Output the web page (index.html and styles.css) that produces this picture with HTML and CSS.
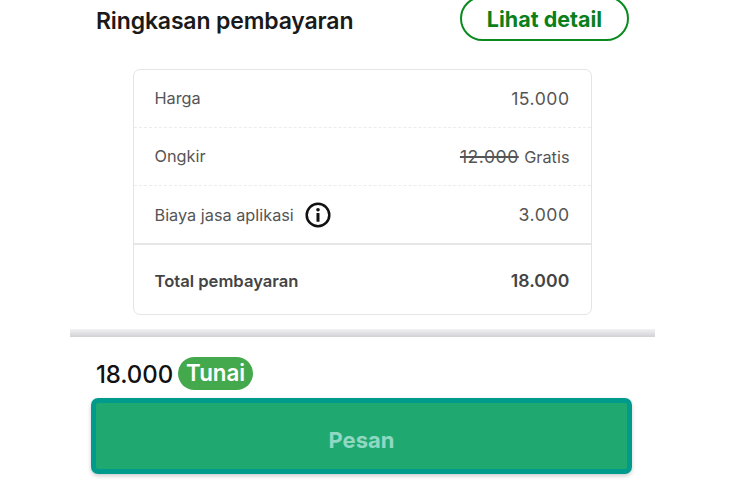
FILE: index.html
```html
<!DOCTYPE html>
<html lang="id">
<head>
<meta charset="utf-8">
<title>Ringkasan pembayaran</title>
<link rel="stylesheet" href="styles.css">
</head>
<body>
<main class="screen">
  <header class="head">
    <h1 class="title">Ringkasan pembayaran</h1>
    <button class="detail-btn">Lihat detail</button>
  </header>
  <section class="card">
    <div class="row dotted"><span>Harga</span><span class="num">15.000</span></div>
    <div class="row dotted"><span>Ongkir</span><span class="num"><s>12.000</s> <span class="label">Gratis</span></span></div>
    <div class="row solid">
      <span class="with-icon">Biaya jasa aplikasi
        <svg class="info" viewBox="0 0 26 26" aria-hidden="true"><circle cx="13" cy="13" r="11.3" fill="none" stroke="#111" stroke-width="2.5"/><circle cx="13" cy="7.8" r="1.8" fill="#111"/><rect x="11.5" y="11" width="3" height="8.8" rx=".5" fill="#111"/></svg>
      </span>
      <span class="num">3.000</span>
    </div>
    <div class="row total"><span>Total pembayaran</span><span class="num">18.000</span></div>
  </section>
  <div class="divider"></div>
  <section class="pay">
    <div class="pay-line"><span class="pay-amount">18.000</span><span class="badge">Tunai</span></div>
    <button class="order-btn">Pesan</button>
  </section>
</main>
</body>
</html>
```
FILE: styles.css
```css
* { box-sizing: border-box; }
html, body { margin: 0; height: 100%; background: #fff; overflow: hidden; }
body { font-family: Inter, "Liberation Sans", sans-serif; }
.screen { width: 585px; height: 500px; margin-left: 70px; display: flex; flex-direction: column; }
.head { height: 41px; padding: 0 26px; display: flex; justify-content: space-between; align-items: flex-end; }
.title { margin: 0 0 6px; font-size: 23px; line-height: 28px; font-weight: 600; color: #1a1a1a; letter-spacing: -.15px; }
.detail-btn { flex: none; width: 169px; height: 45px; border: 2px solid #0a8a1e; border-radius: 23px; background: #fff; color: #0a7f1a; font: 700 21.5px/1 Inter, "Liberation Sans", sans-serif; padding: 3px 0 0; }
.card { width: 458.5px; height: 246px; margin: 28px 0 0 63px; border: 1.5px solid #e4e4e4; border-radius: 7px; display: flex; flex-direction: column; color: #555; font-size: 16.3px; }
.row { flex: none; height: 58px; padding: 0 21px 1px 20.5px; display: flex; justify-content: space-between; align-items: center; }
.dotted { border-bottom: 1px dashed #ececec; }
.solid { height: 59px; padding-bottom: 0; border-bottom: 2px solid #e6e6e6; }
.total { flex: 1; padding-top: 2px; padding-bottom: 0; font-weight: 600; color: #444; font-size: 16.6px; }
.num { font-size: 17.6px; letter-spacing: .5px; }
.total .num { letter-spacing: .1px; }
.num s { text-decoration-thickness: 1.5px; }
.label { font-size: 16.3px; letter-spacing: 0; }
.with-icon { display: flex; align-items: center; gap: 11px; }
.info { width: 26px; height: 26px; }
.divider { height: 8px; margin-top: 14px; background: linear-gradient(#f2f2f4, #d2d2d6); }
.pay { padding: 20px 21px 0; }
.pay-line { display: flex; align-items: center; gap: 5px; padding-left: 5px; height: 33px; }
.pay-amount { font-size: 24px; font-weight: 500; color: #111; letter-spacing: -.1px; padding-top: 2px; }
.badge { height: 33px; padding: 0 7.5px 0 8px; border-radius: 17px; background: #43a94c; color: #fff; font-size: 22.3px; font-weight: 600; line-height: 32px; }
.order-btn { display: block; width: 541px; height: 76px; margin-top: 8px; border: 5.5px solid #009b8c; border-radius: 7px; background: #1fa971; color: #8fd8c4; font: 700 22px/1 Inter, "Liberation Sans", sans-serif; box-shadow: 0 2px 4px rgba(0,0,0,.2); padding: 8px 0 0; }
```
